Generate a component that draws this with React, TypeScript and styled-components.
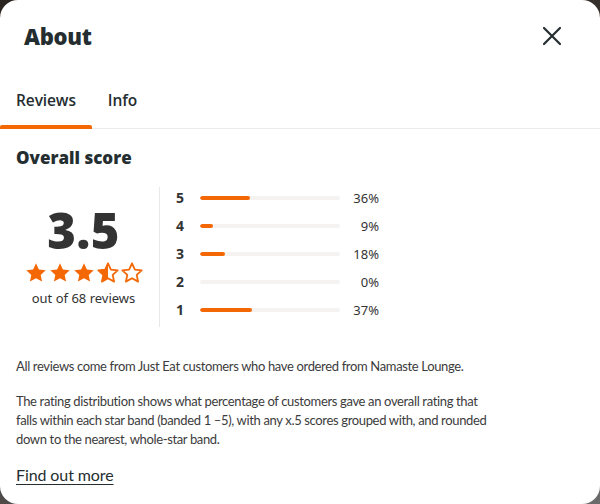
import React from "react";
import styled, { createGlobalStyle } from "styled-components";

const Global = createGlobalStyle`
  html, body { margin: 0; padding: 0; }
  body {
    width: 600px; height: 504px; overflow: hidden;
    background: linear-gradient(160deg, #2a2420 0%, #3b3633 50%, #6b6b6b 100%);
    font-family: "Lato", "Noto Sans", sans-serif;
    color: #242e30;
  }
`;

const Modal = styled.div`
  width: 600px;
  height: 504px;
  background: #fff;
  border-radius: 18px;
  box-sizing: border-box;
  display: flex;
  flex-direction: column;
  overflow: hidden;
`;

const Header = styled.div`
  display: flex;
  align-items: center;
  justify-content: space-between;
  padding: 15px 36px 0 24px;
  height: 56px;
  box-sizing: border-box;
`;

const Title = styled.h1`
  margin: 0;
  font-family: "Open Sans", sans-serif;
  font-weight: 800;
  font-size: 22px;
  letter-spacing: -0.3px;
  color: #242e30;
`;

const CloseButton = styled.button`
  border: 0;
  background: none;
  padding: 0;
  width: 24px;
  height: 24px;
  display: flex;
  align-items: center;
  justify-content: center;
  cursor: pointer;
`;

const Tabs = styled.div`
  display: flex;
  margin-top: 17px;
  border-bottom: 1px solid #ececec;
`;

const Tab = styled.div<{ $active?: boolean }>`
  position: relative;
  padding: 16px 16px 17px;
  font-family: "Open Sans", sans-serif;
  font-weight: 600;
  font-size: 15.5px;
  color: #242e30;
  letter-spacing: -0.1px;
  &::after {
    content: "";
    display: ${(p) => (p.$active ? "block" : "none")};
    position: absolute;
    left: 0; right: 0; bottom: -1px;
    height: 4px;
    border-radius: 2px 2px 0 0;
    background: #f36805;
  }
`;

const Body = styled.div`
  padding: 18px 16px 0;
  display: flex;
  flex-direction: column;
`;

const SectionTitle = styled.h2`
  margin: 0;
  font-family: "Open Sans", sans-serif;
  font-weight: 800;
  font-size: 17px;
  line-height: 22px;
  color: #242e30;
`;

const ScoreArea = styled.div`
  display: flex;
  margin-top: 18px;
`;

const Summary = styled.div`
  width: 144px;
  padding-right: 8px;
  box-sizing: border-box;
  border-right: 1px solid #e8e8e8;
  display: flex;
  flex-direction: column;
  align-items: center;
  justify-content: center;
  height: 140px;
`;

const Score = styled.div`
  font-family: "Open Sans", sans-serif;
  font-weight: 800;
  font-size: 49px;
  line-height: 44px;
  letter-spacing: 0.3px;
  color: #333;
`;

const Stars = styled.div`
  display: flex;
  gap: 2px;
  margin-top: 10px;
`;

const Reviews = styled.div`
  font-family: "Noto Sans", sans-serif;
  font-size: 13px;
  color: #333;
  margin-top: 5px;
`;

const Distribution = styled.div`
  display: flex;
  flex-direction: column;
  padding-left: 16px;
  padding-top: 1px;
  gap: 10px;
`;

const Row = styled.div`
  display: grid;
  grid-template-columns: 24px 140px 39px;
  align-items: center;
  height: 18px;
`;

const Num = styled.span`
  font-family: "Open Sans", sans-serif;
  font-weight: 700;
  font-size: 14px;
  color: #333;
`;

const Track = styled.div`
  height: 4px;
  border-radius: 2px;
  background: #f5f3f1;
  overflow: hidden;
`;

const Fill = styled.div`
  height: 100%;
  border-radius: 2px;
  background: #f36805;
`;

const Pct = styled.span`
  text-align: right;
  font-family: "Noto Sans", sans-serif;
  font-size: 13px;
  color: #333;
`;

const Text = styled.p`
  margin: 0;
  max-width: 480px;
  font-size: 13px;
  letter-spacing: -0.35px;
  line-height: 19px;
  color: #3c3c3c;
`;

const TextBlock = styled.div`
  display: flex;
  flex-direction: column;
  gap: 16px;
  margin-top: 30px;
`;

const Link = styled.a`
  align-self: flex-start;
  margin-top: 16px;
  font-size: 16px;
  letter-spacing: -0.1px;
  color: #242e30;
  text-decoration: underline;
  text-underline-offset: 3px;
`;

const StarIcon = ({ kind }: { kind: "full" | "half" | "empty" }) => {
  const d =
    "M11 1.3l2.9 6.3 6.8.7-5 4.6 1.4 6.7L11 16.2l-6.1 3.4 1.4-6.7-5-4.6 6.8-.7z";
  return (
    <svg width="22" height="22" viewBox="0 0 22 22">
      <defs>
        <clipPath id="halfclip">
          <rect x="0" y="0" width="11" height="22" />
        </clipPath>
      </defs>
      {kind === "full" && <path d={d} fill="#f36805" />}
      {kind !== "full" && (
        <path d={d} fill="none" stroke="#f36805" strokeWidth="1.8" strokeLinejoin="round" />
      )}
      {kind === "half" && <path d={d} fill="#f36805" clipPath="url(#halfclip)" />}
    </svg>
  );
};

const rows = [
  { n: 5, p: 36 },
  { n: 4, p: 9 },
  { n: 3, p: 18 },
  { n: 2, p: 0 },
  { n: 1, p: 37 },
];

export default function App() {
  return (
    <>
      <Global />
      <Modal>
        <Header>
          <Title>About</Title>
          <CloseButton aria-label="Close">
            <svg width="20" height="20" viewBox="0 0 20 20">
              <path d="M2 2L18 18M18 2L2 18" stroke="#242e30" strokeWidth="2.2" strokeLinecap="round" />
            </svg>
          </CloseButton>
        </Header>
        <Tabs>
          <Tab $active>Reviews</Tab>
          <Tab>Info</Tab>
        </Tabs>
        <Body>
          <SectionTitle>Overall score</SectionTitle>
          <ScoreArea>
            <Summary>
              <Score>3.5</Score>
              <Stars>
                <StarIcon kind="full" />
                <StarIcon kind="full" />
                <StarIcon kind="full" />
                <StarIcon kind="half" />
                <StarIcon kind="empty" />
              </Stars>
              <Reviews>out of 68 reviews</Reviews>
            </Summary>
            <Distribution>
              {rows.map((r) => (
                <Row key={r.n}>
                  <Num>{r.n}</Num>
                  <Track>
                    <Fill style={{ width: `${r.p}%` }} />
                  </Track>
                  <Pct>{r.p}%</Pct>
                </Row>
              ))}
            </Distribution>
          </ScoreArea>
          <TextBlock>
            <Text>All reviews come from Just Eat customers who have ordered from Namaste Lounge.</Text>
            <Text>
              The rating distribution shows what percentage of customers gave an overall rating that
              falls within each star band (banded 1 –5), with any x.5 scores grouped with, and rounded
              down to the nearest, whole-star band.
            </Text>
          </TextBlock>
          <Link href="#">Find out more</Link>
        </Body>
      </Modal>
    </>
  );
}
